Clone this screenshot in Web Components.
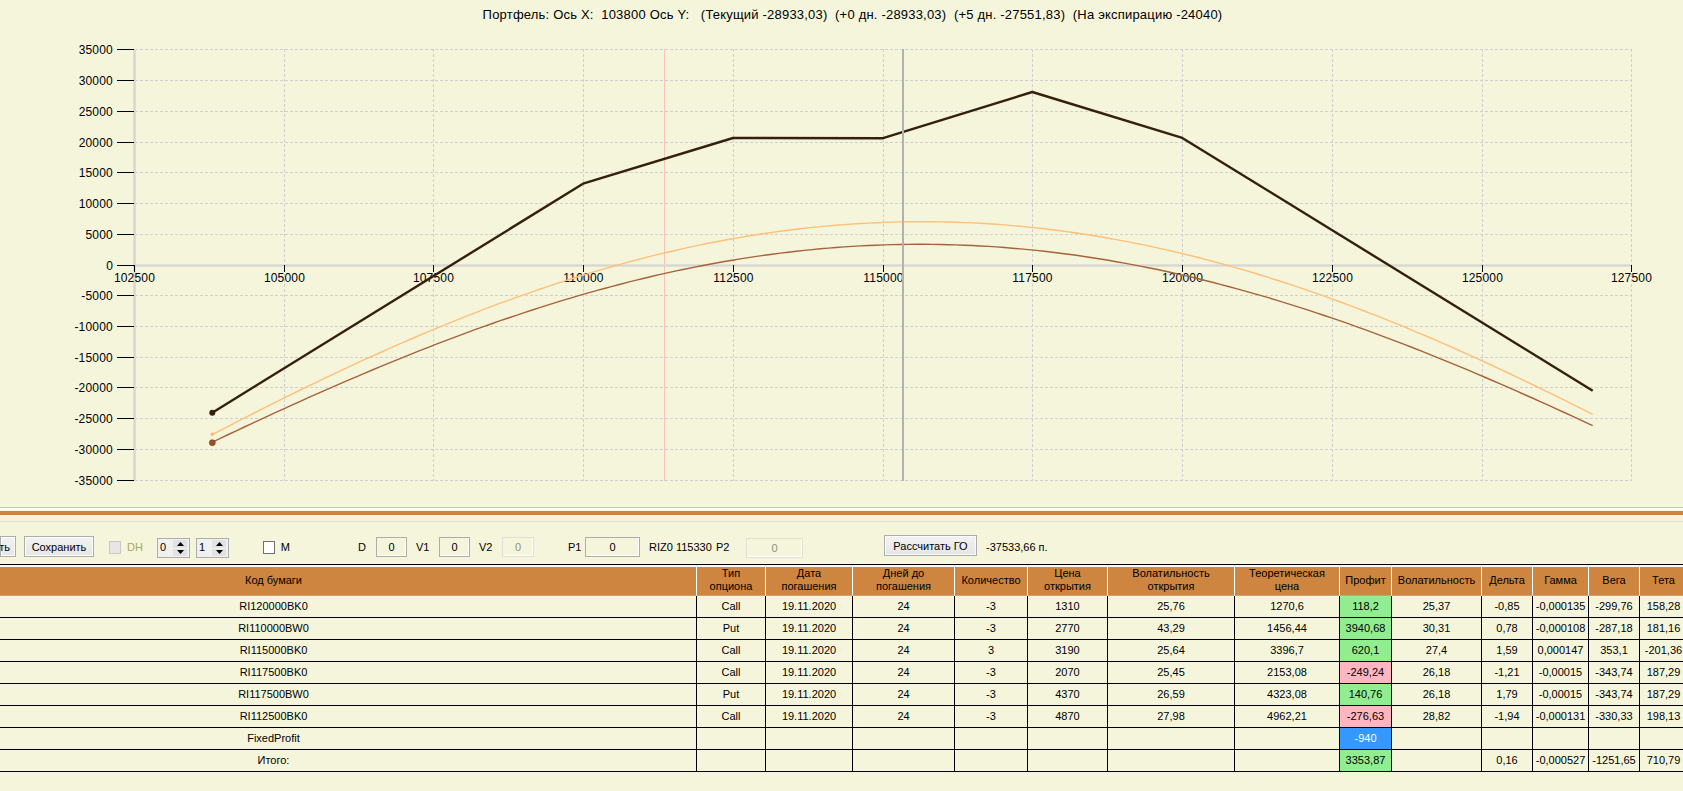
<!DOCTYPE html>
<html lang="ru">
<head>
<meta charset="utf-8">
<title>Портфель</title>
<style>
  html, body { margin: 0; height: 100%; overflow: hidden; background: #f5f5dc; }
  body { font: 11px "Liberation Sans", Arial, sans-serif; color: #000; }
</style>
</head>
<body>
<option-desk></option-desk>
<script>
// pixel rows and columns of the ticks, read off the reference
const X_TICKS = [[102500,134],[105000,284],[107500,433],[110000,583],[112500,733],[115000,883],
  [117500,1032],[120000,1182],[122500,1332],[125000,1482],[127500,1631]];
const Y_TICKS = [[35000,49],[30000,80],[25000,111],[20000,142],[15000,172],[10000,203],[5000,234],[0,265],
  [-5000,295],[-10000,326],[-15000,357],[-20000,387],[-25000,418],[-30000,449],[-35000,480]];

// time-value curves are close to a flattened parabola around their peak
function curve(peakX, peakY, a, b, fromX, toX) {
  const pts = [];
  for (let x = fromX; x < toX; x += 8) {
    const dx = x - peakX;
    pts.push(`${x.toFixed(1)},${(peakY + (a - b * dx * dx) * dx * dx).toFixed(1)}`);
  }
  const dx = toX - peakX;
  pts.push(`${toX},${(peakY + (a - b * dx * dx) * dx * dx).toFixed(1)}`);
  return pts.join(' ');
}

class PayoffChart extends HTMLElement {
  constructor() {
    super();
    this.attachShadow({ mode: 'open' });

    let grid = '', ticks = '', labels = '';
    X_TICKS.forEach(([v, px]) => {
      const x = px + 0.5;
      if (v > 102500) grid += `<path d="M${x} 49V481" class="grid"/>`;
      ticks += `<path d="M${x} 265V272" class="tick"/>`;
      labels += `<text x="${x}" y="282" text-anchor="middle">${v}</text>`;
    });
    Y_TICKS.forEach(([v, px]) => {
      const y = px + 0.5;
      if (v !== 0) grid += `<path d="M135 ${y}H1632" class="grid"/>`;
      ticks += `<path d="M117 ${y}H134" class="tick"/>`;
      labels += `<text x="113" y="${y + 4}" text-anchor="end">${v}</text>`;
    });

    const expiry = '212.3,412.7 583,183.7 733,138 883,138.2 1032.3,92 1182.3,137.9 1592.7,390.7';

    this.shadowRoot.innerHTML = `
      <style>
        :host { display: block; height: 507px; overflow: hidden; }
        .title {
          height: 30px; box-sizing: border-box; padding: 7px 0 0 22px;
          text-align: center; font-size: 13px; letter-spacing: .2px; line-height: 15px; white-space: pre;
        }
        svg { display: block; }
        text { font: 12px "Liberation Sans", Arial, sans-serif; letter-spacing: .2px; fill: #000; }
        .grid { stroke: #cfcfcf; stroke-width: 1; stroke-dasharray: 3 2; fill: none; }
        .tick { stroke: #000; stroke-width: 1; fill: none; }
      </style>
      <div class="title">Портфель: Ось X:  103800 Ось Y:   (Текущий -28933,03)  (+0 дн. -28933,03)  (+5 дн. -27551,83)  (На экспирацию -24040)</div>
      <svg width="1683" height="477" viewBox="0 30 1683 477">
        ${grid}
        <path d="M664.5 49V481" stroke="#f6c3c0" stroke-width="1"/>
        <path d="M134.5 49V481" stroke="#d6d6d2" stroke-width="2.5"/>
        <path d="M134 265.5H1632" stroke="#d8d8d2" stroke-width="2.5"/>
        ${ticks}
        ${labels}
        <polyline points="${curve(922, 221.7, 4.78e-4, 1.1e-10, 212.3, 1592.7)}" fill="none" stroke="#ffbf78" stroke-width="1.4"/>
        <polyline points="${curve(920, 244.3, 4.55e-4, 1.2e-10, 212.3, 1592.7)}" fill="none" stroke="#a5633a" stroke-width="1.4"/>
        <polyline points="${expiry}" fill="none" stroke="#35200f" stroke-width="2.4" stroke-linejoin="round"/>
        <path d="M903 49V481" stroke="#aeb3b0" stroke-width="2"/>
        <circle cx="212.3" cy="412.7" r="3" fill="#35200f"/>
        <circle cx="212.3" cy="434.3" r="1.8" fill="#ffb870"/>
        <circle cx="212.3" cy="442.7" r="3" fill="#9c5226" stroke="#5f3a20" stroke-width=".6"/>
      </svg>`;
  }
}
customElements.define('payoff-chart', PayoffChart);

class SplitBar extends HTMLElement {
  constructor() {
    super();
    this.attachShadow({ mode: 'open' });
    this.shadowRoot.innerHTML = `
      <style>
        :host {
          display: block; height: 15px; box-sizing: border-box;
          border-bottom: 1px solid #e0dfcf;
        }
        .hi { height: 2px; border-top: 1px solid #c9c9b8; background: #fff; }
        .band { height: 4px; margin-top: 1px; background: #cd853f; }
      </style>
      <div class="hi"></div>
      <div class="band"></div>`;
  }
}
customElements.define('split-bar', SplitBar);

class WinButton extends HTMLElement {
  constructor() {
    super();
    this.attachShadow({ mode: 'open' });
    this.shadowRoot.innerHTML = `
      <style>
        :host {
          display: flex; align-items: center; justify-content: center; flex: none;
          height: 21px; margin-top: -1px; box-sizing: border-box; border: 1px solid #adadad;
          background: linear-gradient(#f2f2f2, #e6e6e6);
          box-shadow: inset 0 0 0 1px #fbfbfb; white-space: nowrap;
        }
      </style>
      <slot></slot>`;
  }
}
customElements.define('win-button', WinButton);

class WinCheck extends HTMLElement {
  constructor() {
    super();
    this.attachShadow({ mode: 'open' });
    this.shadowRoot.innerHTML = `
      <style>
        :host { display: flex; align-items: center; flex: none; gap: 6px; }
        .box { width: 13px; height: 13px; box-sizing: border-box; border: 1px solid #707070; background: #fff; }
        :host([disabled]) { color: #a8a860; }
        :host([disabled]) .box { border-color: #c8c8c8; background: #e6e6e6; }
      </style>
      <div class="box"></div><slot></slot>`;
  }
}
customElements.define('win-check', WinCheck);

class WinField extends HTMLElement {
  constructor() {
    super();
    this.attachShadow({ mode: 'open' });
    this.shadowRoot.innerHTML = `
      <style>
        :host {
          display: flex; align-items: center; justify-content: center; flex: none;
          height: 20px; box-sizing: border-box; border: 1px solid #adadad;
          box-shadow: inset -1px -1px 0 0 #fff;
        }
        :host([disabled]) { color: #909080; border-color: #dedfd6; }
      </style>
      <slot></slot>`;
  }
}
customElements.define('win-field', WinField);

class WinSpin extends HTMLElement {
  constructor() {
    super();
    this.attachShadow({ mode: 'open' });
    this.shadowRoot.innerHTML = `
      <style>
        :host {
          display: flex; flex: none; width: 33px; height: 20px; margin-top: 2px; box-sizing: border-box;
          border: 1px solid #adadad; background: #f0f0f0;
        }
        .val { flex: 1; padding: 2px 0 0 2px; }
        .btns { display: flex; flex-direction: column; width: 14px; margin: 1px 2px 1px 0; gap: 1px; }
        .btn {
          flex: 1; background: #e2e2e2;
          display: flex; align-items: center; justify-content: center;
        }
        svg { display: block; }
      </style>
      <div class="val"><slot></slot></div>
      <div class="btns">
        <div class="btn"><svg width="7" height="4"><path d="M3.5 0L7 4H0z"/></svg></div>
        <div class="btn"><svg width="7" height="4"><path d="M0 0H7L3.5 4z"/></svg></div>
      </div>`;
  }
}
customElements.define('win-spin', WinSpin);

class DeskToolbar extends HTMLElement {
  constructor() {
    super();
    this.attachShadow({ mode: 'open' });
    this.shadowRoot.innerHTML = `
      <style>
        :host {
          display: flex; align-items: center; height: 42px; box-sizing: border-box;
          padding-top: 8px; white-space: nowrap; overflow: hidden;
        }
        ::slotted(span) { flex: none; }
      </style>
      <slot></slot>`;
  }
}
customElements.define('desk-toolbar', DeskToolbar);

const COLS = [846, 69, 87, 102, 73, 80, 127, 105, 52, 90, 51, 56, 51, 48];
const HEAD = ['Код бумаги', 'Тип<br>опциона', 'Дата<br>погашения', 'Дней до<br>погашения', 'Количество',
  'Цена<br>открытия', 'Волатильность<br>открытия', 'Теоретическая<br>цена', 'Профит', 'Волатильность',
  'Дельта', 'Гамма', 'Вега', 'Тета'];
const ROWS = [
  ['RI120000BK0', 'Call', '19.11.2020', '24', '-3', '1310', '25,76', '1270,6', '118,2', '25,37', '-0,85', '-0,000135', '-299,76', '158,28'],
  ['RI110000BW0', 'Put', '19.11.2020', '24', '-3', '2770', '43,29', '1456,44', '3940,68', '30,31', '0,78', '-0,000108', '-287,18', '181,16'],
  ['RI115000BK0', 'Call', '19.11.2020', '24', '3', '3190', '25,64', '3396,7', '620,1', '27,4', '1,59', '0,000147', '353,1', '-201,36'],
  ['RI117500BK0', 'Call', '19.11.2020', '24', '-3', '2070', '25,45', '2153,08', '-249,24', '26,18', '-1,21', '-0,00015', '-343,74', '187,29'],
  ['RI117500BW0', 'Put', '19.11.2020', '24', '-3', '4370', '26,59', '4323,08', '140,76', '26,18', '1,79', '-0,00015', '-343,74', '187,29'],
  ['RI112500BK0', 'Call', '19.11.2020', '24', '-3', '4870', '27,98', '4962,21', '-276,63', '28,82', '-1,94', '-0,000131', '-330,33', '198,13'],
  ['FixedProfit', '', '', '', '', '', '', '', '-940', '', '', '', '', ''],
  ['Итого:', '', '', '', '', '', '', '', '3353,87', '', '0,16', '-0,000527', '-1251,65', '710,79'],
];
const PROFIT = 8;

class OptionGrid extends HTMLElement {
  constructor() {
    super();
    this.attachShadow({ mode: 'open' });
    const tint = (v, label) => {
      if (label === 'FixedProfit') return 'fixed';
      return v.startsWith('-') ? 'loss' : 'gain';
    };
    const body = ROWS.map(r => '<tr>' + r.map((c, i) =>
      `<td${i === PROFIT ? ` class="${tint(c, r[0])}"` : ''}>${c}</td>`).join('') + '</tr>').join('');
    this.shadowRoot.innerHTML = `
      <style>
        :host { display: block; overflow: hidden; border-top: 1px solid #000; padding-top: 1px; }
        table {
          margin-left: -149px; width: ${COLS.reduce((a, b) => a + b, 0)}px;
          table-layout: fixed; border-collapse: separate; border-spacing: 0;
        }
        th {
          height: 30px; padding: 0 0 2px; box-sizing: border-box; background: #cd853f; font-weight: 400;
          line-height: 13px; border-right: 1px solid #fff; border-bottom: 1px solid #a9a9a9;
          border-top: 1px solid #fff;
        }
        td {
          height: 22px; padding: 0 0 2px; box-sizing: border-box; text-align: center;
          border-right: 1px solid #000; border-bottom: 1px solid #000;
        }
        .gain { background: #90ee90; }
        .loss { background: #ffb6c1; }
        .fixed { background: #3399ff; color: #fff; }
      </style>
      <table>
        <colgroup>${COLS.map(w => `<col style="width:${w}px">`).join('')}</colgroup>
        <thead><tr>${HEAD.map(h => `<th>${h}</th>`).join('')}</tr></thead>
        <tbody>${body}</tbody>
      </table>`;
  }
}
customElements.define('option-grid', OptionGrid);

class OptionDesk extends HTMLElement {
  constructor() {
    super();
    this.attachShadow({ mode: 'open' });
    this.shadowRoot.innerHTML = `
      <style>
        :host { display: block; width: 1683px; height: 791px; overflow: hidden; }
      </style>
      <payoff-chart></payoff-chart>
      <split-bar></split-bar>
      <desk-toolbar>
        <win-button style="width:16px;justify-content:flex-end;padding-right:5px">ть</win-button>
        <win-button style="width:70px;margin-left:8px">Сохранить</win-button>
        <win-check disabled style="width:34px;margin-left:15px">DH</win-check>
        <win-spin style="margin-left:14px">0</win-spin>
        <win-spin style="margin-left:6px">1</win-spin>
        <win-check style="width:27px;margin-left:34px">M</win-check>
        <span style="width:8px;margin-left:68px">D</span>
        <win-field style="width:31px;margin-left:10px">0</win-field>
        <span style="width:14px;margin-left:9px">V1</span>
        <win-field style="width:31px;margin-left:9px">0</win-field>
        <span style="width:14px;margin-left:9px">V2</span>
        <win-field disabled style="width:32px;margin-left:9px">0</win-field>
        <span style="width:14px;margin-left:34px">P1</span>
        <win-field style="width:55px;margin-left:3px">0</win-field>
        <span style="width:64px;margin-left:9px">RIZ0 115330</span>
        <span style="width:16px;margin-left:3px">P2</span>
        <win-field disabled style="width:57px;margin-left:14px;margin-top:2px">0</win-field>
        <win-button style="width:93px;margin-left:81px;margin-top:-3px">Рассчитать ГО</win-button>
        <span style="margin-left:9px">-37533,66 п.</span>
      </desk-toolbar>
      <option-grid></option-grid>`;
  }
}
customElements.define('option-desk', OptionDesk);
</script>
</body>
</html>
